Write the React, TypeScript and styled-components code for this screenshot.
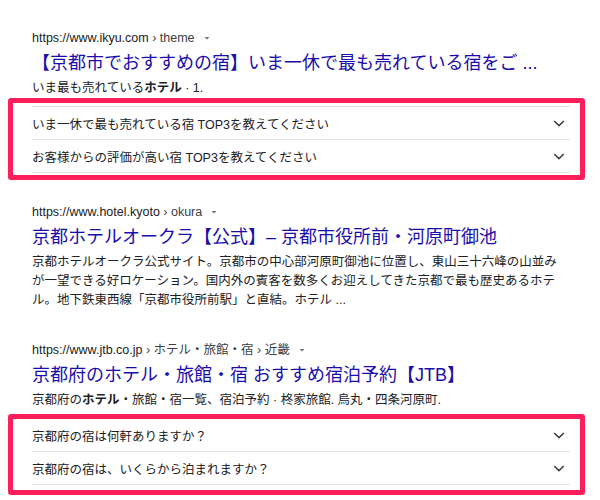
import styled, { createGlobalStyle } from "styled-components"

const GlobalStyle = createGlobalStyle`
  body {
    margin: 0;
    background: #ffffff;
    font-family: "Liberation Sans", "Noto Sans CJK JP", sans-serif;
  }
`

const Page = styled.div`
  width: 600px;
  padding: 28px 15px 0 8px;
  box-sizing: border-box;
  display: flex;
  flex-direction: column;
`

interface ResultProps {
  $top: number
}
const Result = styled.div<ResultProps>`
  margin-top: ${props => `${props.$top}px`};
  padding: 0 0 0 24px;
  display: flex;
  flex-direction: column;
`

const UrlLine = styled.div`
  display: flex;
  align-items: center;
  height: 20px;
  font-size: 12.5px;
  line-height: 20px;
  color: #202124;
  white-space: nowrap;
`

const UrlPath = styled.span`
  color: #3c4043;
`

const DropArrow = styled.svg`
  width: 12px;
  height: 12px;
  margin-left: 6px;
  fill: #70757a;
`

const Title = styled.div`
  margin-top: 2px;
  font-size: 18px;
  line-height: 26px;
  color: #1a0dab;
  white-space: nowrap;
`

const Snippet = styled.div`
  margin-top: 3px;
  max-width: 530px;
  font-size: 12.5px;
  line-height: 19px;
  color: #202124;

  b {
    font-weight: 700;
  }
`

interface HighlightProps {
  $top: number
  $padTop: number
  $padBottom: number
}
const Highlight = styled.div<HighlightProps>`
  margin-top: ${props => `${props.$top}px`};
  border: 5px solid #fd1f5b;
  border-radius: 3px;
  padding: ${props => `${props.$padTop}px 10px ${props.$padBottom}px 19px`};
  display: flex;
  flex-direction: column;
`

const FaqList = styled.div`
  display: flex;
  flex-direction: column;
  border-bottom: 1px solid #e3e3e3;
`

interface FaqRowProps {
  $bare?: boolean
}
const FaqRow = styled.div<FaqRowProps>`
  display: flex;
  align-items: center;
  justify-content: space-between;
  height: 32px;
  border-top: ${props => (props.$bare ? "none" : "1px solid #e3e3e3")};
  font-size: 12.5px;
  color: #202124;
  padding-right: 1px;
`

const Chevron = styled.svg`
  width: 20px;
  height: 20px;
  fill: none;
  stroke: #3c4043;
  stroke-width: 1.5;
`

const Arrow = () => (
  <DropArrow viewBox="0 0 12 12">
    <polygon points="3.5,5 8.5,5 6,7.5" />
  </DropArrow>
)

const Faq = ({ text, bare }: { text: string; bare?: boolean }) => (
  <FaqRow $bare={bare}>
    <span>{text}</span>
    <Chevron viewBox="0 0 20 20">
      <path d="M5.2 8 L10 12.6 L14.8 8" />
    </Chevron>
  </FaqRow>
)

const App = () => {
  return (
    <>
      <GlobalStyle />
      <Page>
        <Result $top={0}>
          <UrlLine>
            https://www.ikyu.com<UrlPath>&nbsp;› theme</UrlPath>
            <Arrow />
          </UrlLine>
          <Title>【京都市でおすすめの宿】いま一休で最も売れている宿をご ...</Title>
          <Snippet>
            いま最も売れている<b>ホテル</b> · 1.
          </Snippet>
        </Result>
        <Highlight $top={0} $padTop={3} $padBottom={2}>
          <FaqList>
            <Faq text="いま一休で最も売れている宿 TOP3を教えてください" />
            <Faq text="お客様からの評価が高い宿 TOP3を教えてください" />
          </FaqList>
        </Highlight>

        <Result $top={22}>
          <UrlLine>
            https://www.hotel.kyoto<UrlPath>&nbsp;› okura</UrlPath>
            <Arrow />
          </UrlLine>
          <Title>京都ホテルオークラ【公式】– 京都市役所前・河原町御池</Title>
          <Snippet>
            京都ホテルオークラ公式サイト。京都市の中心部河原町御池に位置し、東山三十六峰の山並みが一望できる好ロケーション。国内外の賓客を数多くお迎えしてきた京都で最も歴史あるホテル。地下鉄東西線「京都市役所前駅」と直結。ホテル ...
          </Snippet>
        </Result>

        <Result $top={30}>
          <UrlLine>
            https://www.jtb.co.jp<UrlPath>&nbsp;› ホテル・旅館・宿 › 近畿</UrlPath>
            <Arrow />
          </UrlLine>
          <Title>京都府のホテル・旅館・宿 おすすめ宿泊予約【JTB】</Title>
          <Snippet>
            京都府の<b>ホテル</b>・旅館・宿一覧、宿泊予約 · 柊家旅館. 烏丸・四条河原町.
          </Snippet>
        </Result>
        <Highlight $top={4} $padTop={0} $padBottom={5}>
          <FaqList>
            <Faq bare text="京都府の宿は何軒ありますか？" />
            <Faq text="京都府の宿は、いくらから泊まれますか？" />
          </FaqList>
        </Highlight>
      </Page>
    </>
  )
}

export default App
